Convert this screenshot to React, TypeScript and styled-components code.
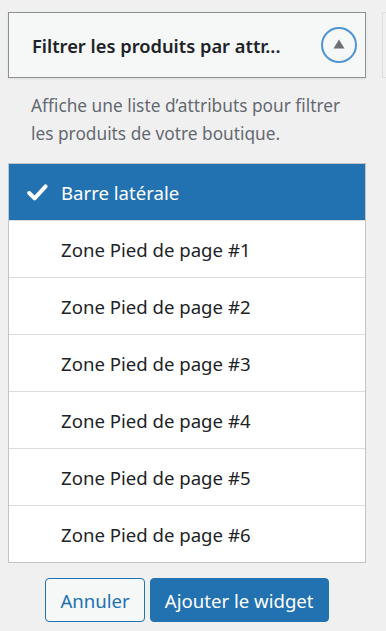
import React from "react";
import styled, { createGlobalStyle } from "styled-components";

const Global = createGlobalStyle`
  html, body { margin: 0; padding: 0; background: #f0f0f1; }
  body { font-family: "Noto Sans", "Open Sans", sans-serif; -webkit-font-smoothing: antialiased; }
  * { box-sizing: border-box; }
`;

const Page = styled.div`
  width: 386px;
  height: 631px;
  position: relative;
  overflow: hidden;
  padding: 12px 20px 0 8px;
`;

const NextEdge = styled.div`
  position: absolute;
  top: 12px;
  left: 382px;
  width: 10px;
  height: 66px;
  border: 1px solid #e0e0e0;
  background: #f0f0f1;
`;

const Header = styled.div`
  height: 66px;
  border: 1px solid #8c8f94;
  background: #f6f7f7;
  box-shadow: 0 1px 2px rgba(0, 0, 0, 0.08);
  display: flex;
  align-items: center;
  justify-content: space-between;
  padding: 0 8px 0 23px;
`;

const Title = styled.h3`
  margin: 0;
  font-size: 18.3px;
  font-weight: 600;
  color: #1d2327;
`;

const ToggleButton = styled.button`
  width: 36px;
  height: 36px;
  border-radius: 50%;
  border: 2px solid #4f94d4;
  background: transparent;
  display: flex;
  align-items: center;
  justify-content: center;
  padding: 0 0 2px;
`;

const Description = styled.p`
  margin: 14px 20px 0 23px;
  font-size: 17.3px;
  line-height: 28px;
  color: #646970;
`;

const List = styled.ul`
  list-style: none;
  margin: 15px 0 0;
  padding: 0;
  border: 1px solid #c3c4c7;
  background: #fff;
`;

const Item = styled.li<{ $selected?: boolean }>`
  box-sizing: content-box;
  height: 56px;
  display: flex;
  align-items: center;
  padding-left: 18px;
  font-size: 18.6px;
  color: ${(p) => (p.$selected ? "#fff" : "#1d2327")};
  background: ${(p) => (p.$selected ? "#2271b1" : "#fff")};
  & + & { border-top: 1px solid #dcdcde; }
`;

const CheckSlot = styled.span`
  width: 34px;
  display: flex;
  align-items: center;
`;

const Actions = styled.div`
  display: flex;
  justify-content: center;
  gap: 5px;
  margin-top: 15px;
`;

const Button = styled.button<{ $primary?: boolean }>`
  height: 44px;
  padding: 0 14px;
  border-radius: 4px;
  font-family: inherit;
  font-size: 18.6px;
  border: 1px solid #2271b1;
  color: ${(p) => (p.$primary ? "#fff" : "#2271b1")};
  background: ${(p) => (p.$primary ? "#2271b1" : "#f6f7f7")};
`;

const items = [
  "Barre latérale",
  "Zone Pied de page #1",
  "Zone Pied de page #2",
  "Zone Pied de page #3",
  "Zone Pied de page #4",
  "Zone Pied de page #5",
  "Zone Pied de page #6",
];

export default function App() {
  return (
    <Page>
      <Global />
      <NextEdge />
      <Header>
        <Title>Filtrer les produits par attr...</Title>
        <ToggleButton aria-label="Réduire">
          <svg width="12" height="10" viewBox="0 0 12 10">
            <path d="M6 0.5 L11.5 9.5 L0.5 9.5 Z" fill="#6c6f74" />
          </svg>
        </ToggleButton>
      </Header>
      <Description>
        Affiche une liste d’attributs pour filtrer les produits de votre boutique.
      </Description>
      <List>
        {items.map((label, i) => (
          <Item key={label} $selected={i === 0}>
            <CheckSlot>
              {i === 0 && (
                <svg width="21" height="17" viewBox="0 0 21 17">
                  <path d="M2.2 9 L7.6 14.4 L18.6 2.4" fill="none" stroke="#fff" strokeWidth="4" strokeLinecap="round" strokeLinejoin="round" />
                </svg>
              )}
            </CheckSlot>
            {label}
          </Item>
        ))}
      </List>
      <Actions>
        <Button>Annuler</Button>
        <Button $primary>Ajouter le widget</Button>
      </Actions>
    </Page>
  );
}
